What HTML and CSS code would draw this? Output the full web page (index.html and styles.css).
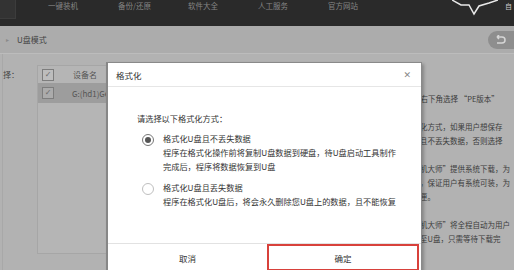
FILE: index.html
```html
<!DOCTYPE html>
<html lang="zh-CN">
<head>
    <meta charset="UTF-8">
    <title>U盘模式 - 格式化</title>
    <link rel="stylesheet" href="styles.css">
</head>
<body>
    <div class="topbar">
        <div class="logo-box"></div>
        <div class="nav">
            <span class="nav-item">一键装机</span>
            <span class="nav-item">备份/还原</span>
            <span class="nav-item">软件大全</span>
            <span class="nav-item">人工服务</span>
            <span class="nav-item">官方网站</span>
        </div>
        <svg class="star" width="46" height="16" viewBox="0 0 46 16">
            <polyline points="0,0 9,5 17,5 22,14 27,6 37,3 46,0" fill="none" stroke="#e8e8e8" stroke-width="1.5"/>
        </svg>
        <span class="top-edge">自</span>
    </div>

    <div class="subbar">
        <span class="arrow">&#9656;</span>
        <span class="sub-title">U盘模式</span>
        <span class="back-btn">
            <svg width="12" height="10" viewBox="0 0 12 10"><path d="M3 2 H8 A3 3 0 0 1 8 8 H3 M3 2 L5 0 M3 2 L5 4" fill="none" stroke="#d6d6d6" stroke-width="1.5"/></svg>
        </span>
    </div>

    <div class="content">
        <div class="pick-label">择：</div>
        <div class="device-panel">
            <div class="dev-row head">
                <span class="check">&#10003;</span>
                <span class="dev-name">设备名</span>
            </div>
            <div class="dev-row picked">
                <span class="check">&#10003;</span>
                <span class="dev-name">G:(hd1)Generic</span>
            </div>
        </div>
        <div class="help-text">
            <p class="shift">，右下角选择 “PE版本”</p>
            <p class="gap">化方式，如果用户想保存</p>
            <p>且不丢失数据，否则选择</p>
            <p class="gap">机大师”提供系统下载，为</p>
            <p>，保证用户有系统可装，为</p>
            <p>匣。</p>
            <p class="gap">机大师”将全程自动为用户</p>
            <p>至U盘，只需等待下载完</p>
        </div>
    </div>

    <div class="dialog">
        <div class="dlg-title">
            <span>格式化</span>
            <span class="close">&#10005;</span>
        </div>
        <div class="dlg-body">
            <p class="ask">请选择以下格式化方式：</p>
            <div class="option">
                <span class="radio on"></span>
                <div class="opt-text">
                    <p>格式化U盘且不丢失数据</p>
                    <p>程序在格式化操作前将复制U盘数据到硬盘，待U盘启动工具制作</p>
                    <p>完成后，程序将数据恢复到U盘</p>
                </div>
            </div>
            <div class="option">
                <span class="radio"></span>
                <div class="opt-text">
                    <p>格式化U盘且丢失数据</p>
                    <p>程序在格式化U盘后，将会永久删除您U盘上的数据，且不能恢复</p>
                </div>
            </div>
        </div>
        <div class="dlg-foot">
            <button class="btn cancel">取消</button>
            <button class="btn ok">确定</button>
        </div>
    </div>
</body>
</html>
```

FILE: styles.css
```css
body {
    margin: 0;
    width: 514px;
    height: 270px;
    overflow: hidden;
    position: relative;
    background: #b2b2b2;
    font-family: "Noto Sans CJK SC", "Liberation Sans", sans-serif;
    font-size: 8px;
    color: #3a3a3a;
}

p {
    margin: 0;
}

.topbar {
    height: 26px;
    background: #2a2a2a;
    display: flex;
    align-items: flex-start;
    position: relative;
}

.logo-box {
    width: 15px;
    height: 18px;
    background: #333;
    border-right: 1px solid #3c3c3c;
    border-bottom: 1px solid #3c3c3c;
}

.nav {
    display: flex;
    margin-left: 32px;
    padding-top: 1px;
}

.nav-item {
    color: #858585;
    font-size: 7.5px;
    line-height: 10px;
    width: 70px;
}

.star {
    position: absolute;
    left: 452px;
    top: 0;
}

.top-edge {
    position: absolute;
    left: 505px;
    top: 1px;
    color: #c8c8c8;
    font-size: 7px;
}

.subbar {
    height: 27px;
    background: #acacac;
    border-bottom: 1px solid #bcbcbc;
    display: flex;
    align-items: center;
    padding-left: 6px;
}

.arrow {
    font-size: 6px;
    color: #8a8a8a;
    margin-right: 8px;
}

.sub-title {
    font-size: 8px;
    color: #444;
}

.back-btn {
    margin-left: auto;
    width: 26px;
    height: 18px;
    border-radius: 9px 0 0 9px;
    background: #8e8e8e;
    display: flex;
    align-items: center;
    padding-left: 6px;
    box-sizing: border-box;
}

.content {
    display: flex;
    height: 216px;
}

.pick-label {
    padding-top: 15px;
    font-size: 8px;
    color: #444;
    border-left: 1px solid #a8a8a8;
    margin-left: 2px;
    width: 34px;
}

.device-panel {
    width: 90px;
    margin-top: 11px;
    height: 187px;
    border: 1px solid #a6a6a6;
    background: #b5b5b5;
    overflow: hidden;
}

.dev-row {
    display: flex;
    align-items: center;
    height: 17px;
    white-space: nowrap;
}

.dev-row.picked {
    height: 20px;
    background: #9d9d9d;
}

.check {
    width: 10px;
    height: 10px;
    border: 1px solid #7d7d7d;
    background: #bdbdbd;
    margin-left: 4px;
    color: #6a6a6a;
    font-size: 8px;
    line-height: 10px;
    text-align: center;
    font-family: "DejaVu Sans", sans-serif;
}

.picked .check {
    background: #ababab;
}

.dev-name {
    margin-left: 19px;
    color: #555;
    font-size: 8px;
}

.picked .dev-name {
    margin-left: 18px;
}

.help-text {
    margin-left: auto;
    width: 94px;
    padding-top: 38px;
    white-space: nowrap;
    color: #3c3c3c;
    font-size: 7.5px;
    line-height: 14px;
}

.help-text .shift {
    margin-left: -7px;
}

.help-text .gap {
    margin-top: 14px;
}

.dialog {
    position: absolute;
    left: 106px;
    top: 62px;
    width: 313px;
    background: #fff;
    border: 1px solid #8a8a8a;
    border-left: 2px solid #878787;
    border-bottom: none;
    box-shadow: 2px 2px 3px rgba(0, 0, 0, 0.25);
}

.dlg-title {
    height: 23px;
    border-bottom: 1px solid #e6e6e6;
    display: flex;
    align-items: center;
    justify-content: space-between;
    padding: 0 10px 0 8px;
    font-size: 8.5px;
    color: #333;
}

.close {
    color: #888;
    font-size: 9px;
    font-family: "DejaVu Sans", sans-serif;
}

.dlg-body {
    padding: 24px 0 0 29px;
    box-sizing: border-box;
    height: 156px;
    font-size: 8.2px;
    color: #333;
    line-height: 14px;
}

.ask {
    margin-bottom: 6px;
}

.option {
    display: flex;
    align-items: flex-start;
    margin-left: 5px;
    margin-bottom: 7px;
}

.radio {
    width: 12px;
    height: 12px;
    border: 1px solid #bfbfbf;
    border-radius: 50%;
    margin-top: 3px;
    margin-right: 9px;
    box-sizing: border-box;
    position: relative;
    flex-shrink: 0;
}

.radio.on {
    border-color: #777;
}

.radio.on::after {
    content: "";
    position: absolute;
    left: 2px;
    top: 2px;
    width: 6px;
    height: 6px;
    border-radius: 50%;
    background: #555;
}

.opt-text p {
    white-space: nowrap;
}

.dlg-foot {
    border-top: 1px solid #e2e2e2;
    display: flex;
    height: 27px;
}

.btn {
    border: none;
    background: #fff;
    font-family: inherit;
    font-size: 8.5px;
    color: #333;
    padding: 0;
}

.btn.cancel {
    width: 159px;
}

.btn.ok {
    width: 152px;
    border: 2px solid #d8413b;
}
```
